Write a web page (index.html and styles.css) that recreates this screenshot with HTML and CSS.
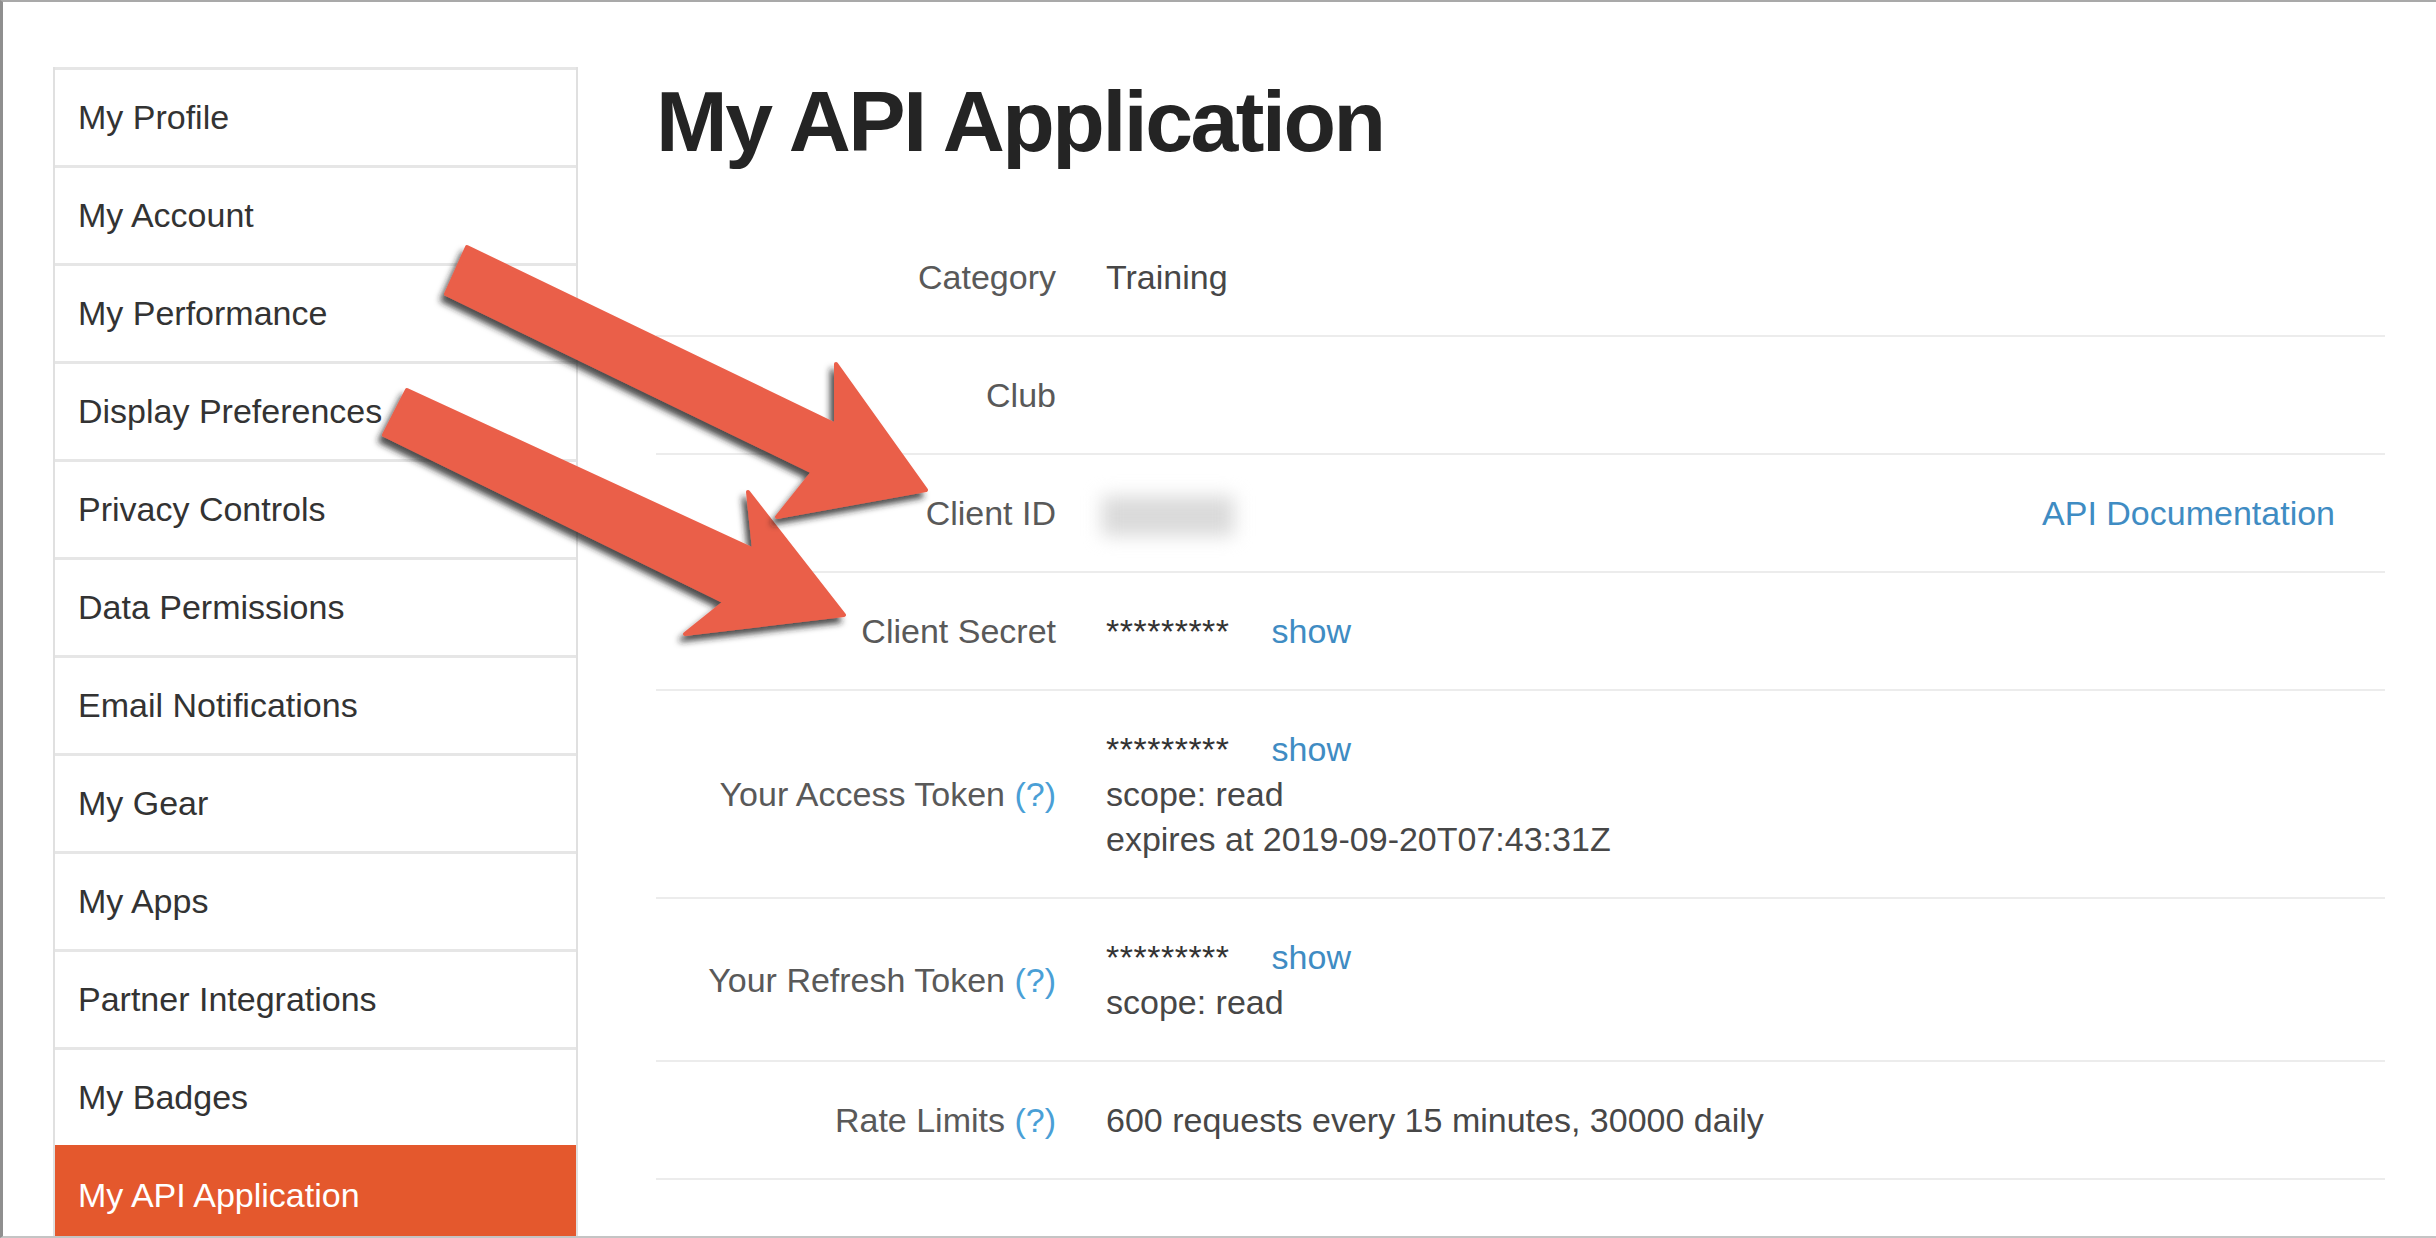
FILE: index.html
```html
<!DOCTYPE html>
<html lang="en">
<head>
  <meta charset="UTF-8">
  <title>My API Application</title>
  <link rel="stylesheet" href="styles.css">
</head>
<body>
  <div class="window">
    <ul class="side-nav">
      <li>My Profile</li>
      <li>My Account</li>
      <li>My Performance</li>
      <li>Display Preferences</li>
      <li>Privacy Controls</li>
      <li>Data Permissions</li>
      <li>Email Notifications</li>
      <li>My Gear</li>
      <li>My Apps</li>
      <li>Partner Integrations</li>
      <li>My Badges</li>
      <li class="active">My API Application</li>
    </ul>

    <div class="main">
      <h1>My API Application</h1>
      <table class="app-table">
        <tr>
          <td class="label">Category</td>
          <td class="value">Training</td>
          <td class="extra"></td>
        </tr>
        <tr>
          <td class="label">Club</td>
          <td class="value"></td>
          <td class="extra"></td>
        </tr>
        <tr>
          <td class="label">Client ID</td>
          <td class="value"><span class="blurred"></span></td>
          <td class="extra"><a href="#">API Documentation</a></td>
        </tr>
        <tr>
          <td class="label">Client Secret</td>
          <td class="value"><span class="stars">*********</span><a href="#" class="show">show</a></td>
          <td class="extra"></td>
        </tr>
        <tr>
          <td class="label">Your Access Token <a href="#" class="help">(?)</a></td>
          <td class="value">
            <div><span class="stars">*********</span><a href="#" class="show">show</a></div>
            <div>scope: read</div>
            <div>expires at 2019-09-20T07:43:31Z</div>
          </td>
          <td class="extra"></td>
        </tr>
        <tr>
          <td class="label">Your Refresh Token <a href="#" class="help">(?)</a></td>
          <td class="value">
            <div><span class="stars">*********</span><a href="#" class="show">show</a></div>
            <div>scope: read</div>
          </td>
          <td class="extra"></td>
        </tr>
        <tr>
          <td class="label">Rate Limits <a href="#" class="help">(?)</a></td>
          <td class="value">600 requests every 15 minutes, 30000 daily</td>
          <td class="extra"></td>
        </tr>
      </table>
    </div>

    <!-- annotation arrows drawn over the page -->
    <svg class="arrows" width="2436" height="1238" viewBox="0 0 2436 1238">
      <defs>
        <filter id="shadow" x="-20%" y="-20%" width="140%" height="140%">
          <feDropShadow dx="-4" dy="6" stdDeviation="3" flood-color="#222" flood-opacity="0.8"/>
        </filter>
      </defs>
      <polygon class="arrow" points="404,388 751,548 745,490 841,613 682,632 722,600 381,433"/>
      <polygon class="arrow" points="464,245 833,423 833,362 923,488 774,515 810,470 443,292"/>
    </svg>
  </div>
</body>
</html>
```

FILE: styles.css
```css
body {
  margin: 0;
  font-family: "Liberation Sans", Arial, sans-serif;
  font-size: 34px;
  color: #333;
  background: #fff;
}

.window {
  position: relative;
  height: 1238px;
  box-sizing: border-box;
  border-top: 2px solid #a9a9a9;
  border-left: 3px solid #8f8f8f;
  border-bottom: 2px solid #c4c4c4;
  padding: 65px 51px 0 50px;
  display: flex;
  gap: 78px;
  overflow: hidden;
}

.side-nav {
  list-style: none;
  margin: 0;
  padding: 0;
  width: 525px;
  flex-shrink: 0;
  box-sizing: border-box;
  border-left: 2px solid #e0e0e0;
  border-right: 2px solid #e0e0e0;
}

.side-nav li {
  height: 98px;
  box-sizing: border-box;
  border-top: 3px solid #e6e6e6;
  padding-left: 23px;
  display: flex;
  align-items: center;
  color: #333;
}

.side-nav li.active {
  background: #e4582d;
  border-top-color: #e4582d;
  color: #fff;
}

.main {
  flex: 1;
}

h1 {
  margin: 11px 0 55px;
  font-size: 86px;
  line-height: 86px;
  font-weight: 700;
  letter-spacing: -2.5px;
  color: #242424;
}

.app-table {
  width: 100%;
  border-collapse: collapse;
}

.app-table td {
  padding: 36px 0 35px;
  line-height: 45px;
  border-bottom: 2px solid #ececec;
  vertical-align: middle;
}

.app-table .label {
  width: 400px;
  text-align: right;
  color: #595959;
  white-space: nowrap;
}

.app-table .value {
  padding-left: 50px;
  color: #474747;
  white-space: nowrap;
}

.app-table .extra {
  text-align: right;
  padding-right: 50px;
}

a {
  color: #3f8cc3;
  text-decoration: none;
}

.help {
  color: #4a9fd6;
}

.stars {
  color: #333;
  letter-spacing: 0.5px;
}

.show {
  margin-left: 42px;
}

.blurred {
  display: inline-block;
  width: 132px;
  height: 40px;
  margin-left: -4px;
  vertical-align: middle;
  background: #dadada;
  filter: blur(9px);
}

.arrows {
  position: absolute;
  left: 0;
  top: 0;
  pointer-events: none;
}

.arrow {
  fill: #ea5f4a;
  stroke: #ea5f4a;
  stroke-width: 4;
  stroke-linejoin: round;
  filter: url(#shadow);
}
```
